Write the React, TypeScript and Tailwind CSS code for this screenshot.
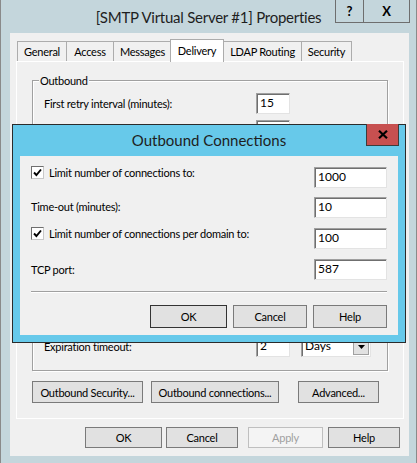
import React from "react";

const ui = "font-[Lato,'Liberation_Sans',sans-serif] text-[11px] tracking-[-0.25px] leading-[15px]";

function Button({ label, className, disabled }: { label: string; className: string; disabled?: boolean }) {
  return (
    <div
      className={
        "flex items-center justify-center whitespace-nowrap border " +
        (disabled ? "bg-[#f4f4f4] border-[#bfbfbf] text-[#a0a0a0] " : "bg-[#e1e1e1] border-[#7a7a7a] text-black ") +
        className
      }
    >
      {label}
    </div>
  );
}

function Field({ value, className }: { value: string; className: string }) {
  return (
    <div
      className={
        "h-[21px] bg-white border border-t-[#a0a0a0] border-l-[#a0a0a0] border-r-[#e3e3e3] border-b-[#e3e3e3] shadow-[inset_1px_1px_0_#6f6f6f] pl-[3px] pt-[1px] text-[12px] tracking-normal text-black " +
        className
      }
    >
      {value}
    </div>
  );
}

function Select({ value }: { value: string }) {
  return (
    <div className="ml-[11px] flex h-[21px] w-[70px] items-stretch border border-t-[#a0a0a0] border-l-[#a0a0a0] border-r-[#e3e3e3] border-b-[#e3e3e3] bg-white shadow-[inset_1px_1px_0_#6f6f6f]">
      <div className="flex-1 pl-[3px] pt-[1px] text-[12px] tracking-normal">{value}</div>
      <div className="my-[1px] mr-[1px] flex w-[16px] items-center justify-center border border-[#a0a0a0] bg-[#e1e1e1]">
        <svg width="7" height="4" viewBox="0 0 7 4">
          <path d="M0 0 H7 L3.5 4 Z" fill="#000" />
        </svg>
      </div>
    </div>
  );
}

function Check() {
  return (
    <div className="flex h-[13px] w-[13px] shrink-0 items-center justify-center border border-t-[#6f6f6f] border-l-[#6f6f6f] border-r-[#c8c8c8] border-b-[#c8c8c8] bg-white">
      <svg width="9" height="9" viewBox="0 0 9 9">
        <path d="M1 4.5 L3.4 7 L8 1.5" stroke="#000" strokeWidth="1.9" fill="none" />
      </svg>
    </div>
  );
}

function Row({ label, value, select }: { label: string; value: string; select?: string }) {
  return (
    <div className="flex h-[21px] items-center">
      <div className="w-[223px] pl-[11px]">{label}</div>
      <Field value={value} className="w-[34px]" />
      {select && <Select value={select} />}
    </div>
  );
}

const tabs = [
  { label: "General", w: "w-[50px]" },
  { label: "Access", w: "w-[48px]" },
  { label: "Messages", w: "w-[59px]" },
  { label: "Delivery", w: "w-[54px]", active: true },
  { label: "LDAP Routing", w: "w-[79px]" },
  { label: "Security", w: "w-[51px]" },
];

function OutboundDialog() {
  return (
    <div className="absolute left-[11px] top-[124px] flex h-[219px] w-[394px] flex-col border border-[#2b2b2b] bg-[#67c9ea] px-[7px] pb-[7px]">
      <div className="flex h-[31px] items-center justify-center pb-[1px] text-[15px] leading-[18px] tracking-normal text-[#1e1e1e]">
        Outbound Connections
      </div>
      <div className="absolute -top-px right-[6px] flex h-[22px] w-[33px] items-center justify-center border border-[#3c3c3c] border-t-0 bg-[#c75050]">
        <svg width="10" height="9" viewBox="0 0 10 9">
          <path d="M1 0.8 L9 8.2 M9 0.8 L1 8.2" stroke="#000" strokeWidth="2.2" />
        </svg>
      </div>
      <div className="flex flex-1 flex-col bg-[#f0f0f0] px-[11px] pt-[10px] text-black">
        <div className="flex items-start justify-between">
          <div className="flex h-[13px] items-center gap-[5px]">
            <Check />
            <span>Limit number of connections to:</span>
          </div>
          <Field value="1000" className="mt-px w-[73px]" />
        </div>
        <div className="mt-[9px] flex items-center justify-between">
          <span className="-mt-[2px]">Time-out (minutes):</span>
          <Field value="10" className="w-[73px]" />
        </div>
        <div className="mt-[9px] flex items-start justify-between">
          <div className="flex h-[13px] items-center gap-[5px]">
            <Check />
            <span>Limit number of connections per domain to:</span>
          </div>
          <Field value="100" className="mt-px w-[73px]" />
        </div>
        <div className="mt-[10px] flex items-center justify-between">
          <span>TCP port:</span>
          <Field value="587" className="w-[73px]" />
        </div>
        <div className="mt-[11px] h-[2px] border-t border-t-[#a0a0a0] border-b border-b-white" />
        <div className="mt-[12px] flex justify-end gap-[6px]">
          <Button label="OK" className="h-[23px] w-[77px] border-[#333]" />
          <Button label="Cancel" className="h-[23px] w-[74px]" />
          <Button label="Help" className="h-[23px] w-[74px]" />
        </div>
      </div>
    </div>
  );
}

export default function App() {
  return (
    <div className={"relative h-[463px] w-[417px] border-x border-[#8a8a8a] bg-[#c4d6dc] text-black " + ui}>
      <div className="flex h-[33px] items-center justify-center pt-[1px] text-[15px] leading-[18px] tracking-[-0.25px] text-[#1e1e1e]">
        [SMTP Virtual Server #1] Properties
      </div>
      <div className="absolute right-[6px] top-0 flex h-[23px] border border-t-0 border-[#6e6e6e] text-[13px] font-bold leading-[16px] tracking-normal">
        <div className="flex w-[28px] items-center justify-center border-r border-[#6e6e6e]">?</div>
        <div className="flex w-[45px] items-center justify-center">X</div>
      </div>

      <div className="ml-[9px] mr-[7px] flex h-[423px] flex-col bg-[#f0f0f0] pl-[6px] pr-[5px] pt-[6px]">
        <div className="relative z-10 flex h-[22px] items-end pl-px">
          {tabs.map((t) =>
            t.active ? (
              <div
                key={t.label}
                className={"-mx-px -mb-px flex h-[23px] items-start justify-center border border-b-0 border-[#acacac] bg-white pt-[3px] " + t.w}
              >
                {t.label}
              </div>
            ) : (
              <div
                key={t.label}
                className={"-mr-px flex h-[20px] items-center justify-center border border-b-0 border-[#acacac] bg-[#f0f0f0] " + t.w}
              >
                {t.label}
              </div>
            )
          )}
        </div>
        <div className="flex h-[358px] flex-col border border-white bg-[#f0f0f0] pt-[18px]">
          <div className="relative mx-[15px] flex h-[291px] flex-col border border-[#a0a0a0] pt-[12px] pb-[13px] shadow-[inset_1px_1px_0_#fff,1px_1px_0_#fff]">
            <span className="absolute -top-[8px] left-[6px] bg-[#f0f0f0] px-[1px]">Outbound</span>
            <Row label="First retry interval (minutes):" value="15" />
            <div className="mt-[6px] flex pl-[223px]">
              <Field value="" className="w-[34px]" />
            </div>
            <div className="flex-1" />
            <Row label="Expiration timeout:" value="2" select="Days" />
          </div>
          <div className="mt-[10px] flex pl-[15px]">
            <Button label="Outbound Security..." className="h-[22px] w-[111px]" />
            <Button label="Outbound connections..." className="ml-[8px] h-[22px] w-[128px]" />
            <Button label="Advanced..." className="ml-[19px] h-[22px] w-[81px]" />
          </div>
        </div>
        <div className="mt-[8px] flex">
          <Button label="OK" className="ml-[69px] h-[21px] w-[77px]" />
          <Button label="Cancel" className="ml-[4px] h-[21px] w-[72px]" />
          <Button label="Apply" disabled className="ml-[10px] h-[21px] w-[75px]" />
          <Button label="Help" className="ml-[5px] h-[21px] w-[72px]" />
        </div>
      </div>

      <OutboundDialog />
    </div>
  );
}
